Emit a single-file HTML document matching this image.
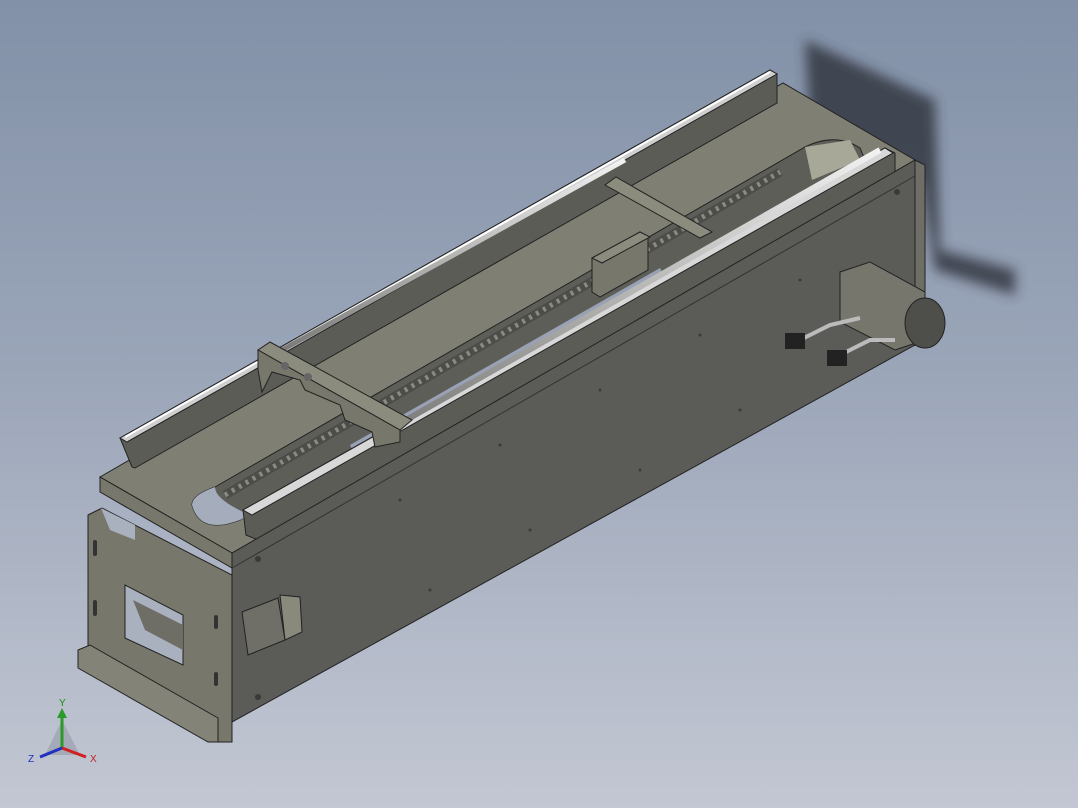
<!DOCTYPE html>
<html><head><style>
html,body{margin:0;padding:0}
body{width:1078px;height:808px;overflow:hidden;background:linear-gradient(180deg,#8291a8 0%,#9aa5b8 45%,#c3c7d3 100%);font-family:"Liberation Sans",sans-serif}
svg{position:absolute;left:0;top:0}
</style></head><body>
<svg width="1078" height="808" viewBox="0 0 1078 808">
<defs>
<filter id="bl" x="-30%" y="-30%" width="160%" height="160%"><feGaussianBlur stdDeviation="6"/></filter>
<linearGradient id="rod" x1="0" y1="0" x2="0" y2="1"><stop offset="0" stop-color="#f2f2f2"/><stop offset="1" stop-color="#7a7a78"/></linearGradient>
</defs>
<g filter="url(#bl)" fill="#2e333b" opacity="0.8">
<polygon points="805,40 935,100 940,250 1015,270 1015,295 935,270 920,180 810,125"/>
</g>
<!-- top plate -->
<polygon points="100,477 783,83 915,160 232,553" fill="#7f7f73" stroke="#222"/>
<polygon points="100,477 232,553 232,568 100,492" fill="#77776c" stroke="#222"/>
<!-- slot -->
<path d="M215,487 L805,147 Q835,132 860,148 L865,160 L240,520 Q200,535 192,505 Q192,495 215,487 Z" fill="#5e5e58" stroke="#222"/>
<path d="M192,505 Q200,535 240,520 L250,515 Q215,500 215,487 Q192,495 192,505Z" fill="#a5adbd"/>
<polygon points="350,445 660,268 665,278 355,455" fill="#98a2b4"/>
<polygon points="805,147 850,140 860,160 812,180" fill="#a8a898"/>
<!-- chain -->
<line x1="225" y1="495" x2="780" y2="172" stroke="#4c4c48" stroke-width="9"/>
<line x1="225" y1="495" x2="780" y2="172" stroke="#8a8a80" stroke-width="5" stroke-dasharray="3,5"/>
<!-- back rail block -->
<polygon points="120,438 770,70 777,74 777,103 135,468 132,467" fill="#5c5c57" stroke="#222"/>
<polygon points="120,438 770,70 777,74 127,442" fill="#cfcfcf" stroke="#222"/>
<line x1="125" y1="437" x2="770" y2="72" stroke="#fff" stroke-width="2"/>
<!-- front rail block -->
<polygon points="243,510 885,148 895,153 895,178 258,540 246,535" fill="#5c5c57" stroke="#222"/>
<polygon points="243,510 885,148 893,153 252,515" fill="#d8d8d8" stroke="#222"/>
<!-- rods -->
<line x1="282" y1="350" x2="625" y2="160" stroke="url(#rod)" stroke-width="5"/>
<line x1="385" y1="432" x2="880" y2="150" stroke="url(#rod)" stroke-width="6"/>
<!-- left bridge -->
<polygon points="258,350 270,342 412,420 400,430" fill="#8c8c7e" stroke="#222"/>
<polygon points="258,350 400,430 400,442 375,447 372,432 345,420 340,405 305,390 300,380 272,372 262,392 258,370" fill="#77776c" stroke="#222"/>
<circle cx="285" cy="366" r="4" fill="#666"/><circle cx="308" cy="377" r="4" fill="#666"/>
<!-- right bridge -->
<polygon points="605,185 616,177 712,232 700,238" fill="#8c8c7e" stroke="#222"/>
<polygon points="592,258 640,232 648,237 648,270 600,297 592,292" fill="#77776c" stroke="#222"/>
<polygon points="592,258 640,232 650,237 602,263" fill="#8c8c7e" stroke="#222"/>
<!-- front face -->
<polygon points="232,553 915,160 915,345 232,722" fill="#5b5b58" stroke="#222"/>
<polygon points="915,160 925,165 925,330 915,345" fill="#6e6e66" stroke="#222"/>
<line x1="232" y1="568" x2="915" y2="176" stroke="#333" stroke-width="1"/>
<!-- left end plate -->
<polygon points="88,515 102,508 232,575 232,742 218,742 88,672" fill="#77776c" stroke="#222"/>
<polygon points="78,650 90,645 218,718 218,742 208,742 78,668" fill="#838378" stroke="#222"/>
<polygon points="125,585 183,615 183,665 125,638" fill="#a9b0be" stroke="#222"/>
<polygon points="133,600 183,625 183,650 145,630" fill="#6e6e66"/>
<polygon points="101,508 135,525 135,540 110,530" fill="#a9b0be"/>
<g fill="#333"><rect x="93" y="540" width="4" height="16" rx="2"/><rect x="93" y="600" width="4" height="16" rx="2"/><rect x="214" y="615" width="4" height="14" rx="2"/><rect x="214" y="672" width="4" height="14" rx="2"/></g>
<polygon points="242,612 278,598 285,640 248,655" fill="#6f6f67" stroke="#222"/>
<polygon points="280,595 300,597 302,632 285,640" fill="#8a8a7c" stroke="#222"/>
<g fill="#3a3a38">
<circle cx="258" cy="559" r="3"/><circle cx="258" cy="697" r="3"/><circle cx="897" cy="192" r="3"/>
<circle cx="400" cy="500" r="1.5"/><circle cx="500" cy="445" r="1.5"/><circle cx="600" cy="390" r="1.5"/><circle cx="700" cy="335" r="1.5"/><circle cx="800" cy="280" r="1.5"/>
<circle cx="430" cy="590" r="1.5"/><circle cx="530" cy="530" r="1.5"/><circle cx="640" cy="470" r="1.5"/><circle cx="740" cy="410" r="1.5"/>
</g>
<!-- motor -->
<polygon points="840,272 870,262 925,292 925,340 895,350 840,322" fill="#76766c" stroke="#222"/>
<ellipse cx="925" cy="323" rx="20" ry="25" fill="#4e4e4a" stroke="#222"/>
<path d="M790,345 L830,325 L860,318" stroke="#bbb" stroke-width="4" fill="none"/>
<path d="M830,360 L870,340 L895,340" stroke="#bbb" stroke-width="4" fill="none"/>
<rect x="785" y="333" width="20" height="16" fill="#222"/>
<rect x="827" y="350" width="20" height="16" fill="#222"/>
<!-- triad -->
<polygon points="62,720 45,755 80,755" fill="#9aa0ac" opacity="0.7"/>
<line x1="62" y1="748" x2="62" y2="717" stroke="#2a9a2a" stroke-width="3"/>
<polygon points="57,718 67,718 62,708" fill="#2a9a2a"/>
<line x1="62" y1="748" x2="86" y2="757" stroke="#d02020" stroke-width="3"/>
<line x1="62" y1="748" x2="40" y2="757" stroke="#2030c0" stroke-width="3"/>
<text x="59" y="706" font-size="10" fill="#1a8a1a">Y</text>
<text x="90" y="762" font-size="10" fill="#c02020">X</text>
<text x="28" y="762" font-size="10" fill="#2030c0">Z</text>
</svg>
</body></html>
